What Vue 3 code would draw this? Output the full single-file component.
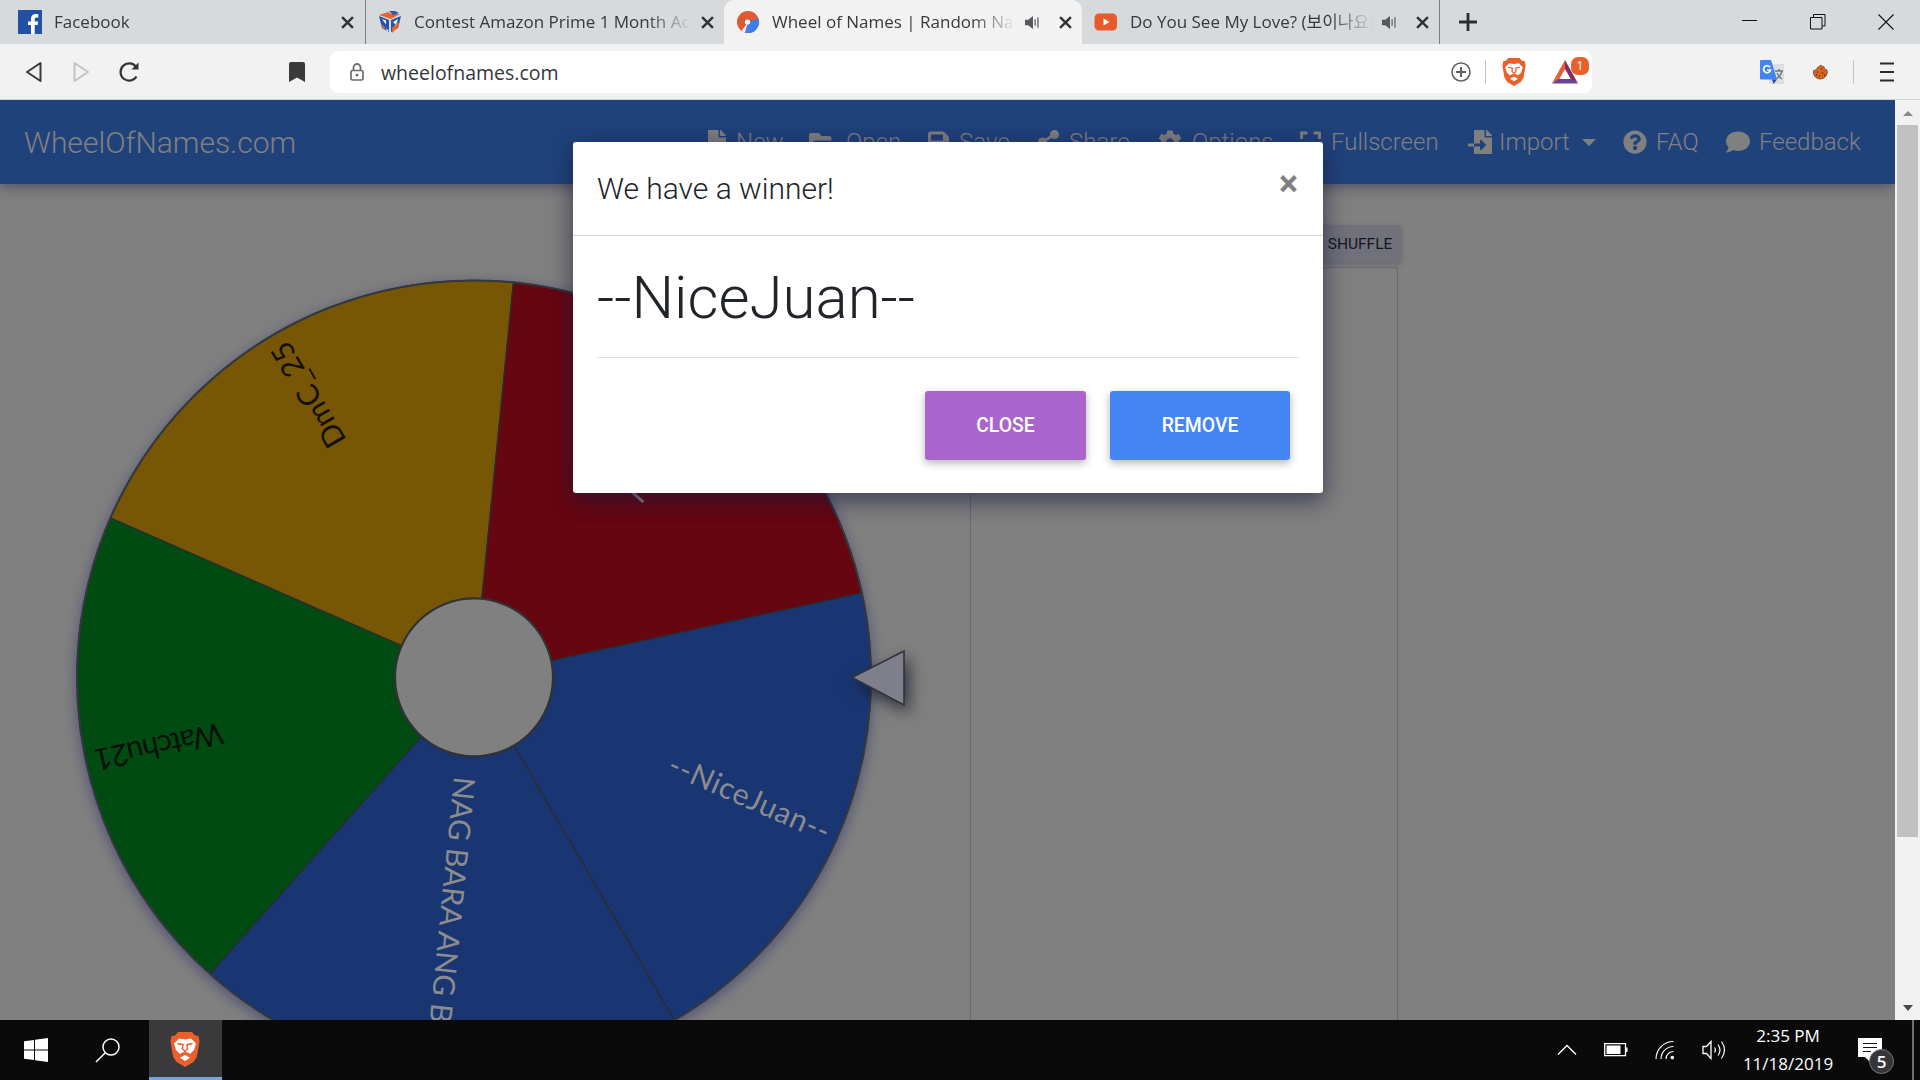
<script setup>
import { computed, ref } from "vue";

// Browser tabs
const tabs = ref([
  { id: "facebook", title: "Facebook", audio: false, active: false },
  { id: "contest", title: "Contest Amazon Prime 1 Month Access", audio: false, active: false },
  { id: "names", title: "Wheel of Names | Random Name Picker", audio: true, active: true },
  { id: "youtube", title: "Do You See My Love? (보이나요)", audio: true, active: false },
]);

// Navbar links, icons on a 512 high grid
const navItems = [
  {
    label: "New",
    w: 384,
    path: "M224 136V0H24C10.7 0 0 10.7 0 24v464c0 13.3 10.7 24 24 24h336c13.3 0 24-10.7 24-24V160H248c-13.2 0-24-10.8-24-24zm160-14.1v6.1H256V0h6.1c6.4 0 12.5 2.5 17 7l97.9 98c4.5 4.5 7 10.6 7 16.9z",
  },
  {
    label: "Open",
    w: 576,
    path: "M572.694 292.093L500.27 416.248A63.997 63.997 0 0 1 444.989 448H45.025c-18.523 0-30.064-20.093-20.731-36.093l72.424-124.155A64 64 0 0 1 152 256h399.964c18.523 0 30.064 20.093 20.73 36.093zM152 224h328v-48c0-26.51-21.49-48-48-48H272l-64-64H48C21.49 64 0 85.49 0 112v278.046l69.077-118.418C86.214 242.25 117.989 224 152 224z",
  },
  {
    label: "Save",
    w: 448,
    path: "M433.941 129.941l-83.882-83.882A48 48 0 0 0 316.118 32H48C21.49 32 0 53.49 0 80v352c0 26.51 21.49 48 48 48h352c26.51 0 48-21.49 48-48V163.882a48 48 0 0 0-14.059-33.941zM224 416c-35.346 0-64-28.654-64-64 0-35.346 28.654-64 64-64s64 28.654 64 64c0 35.346-28.654 64-64 64zm96-304.52V212c0 6.627-5.373 12-12 12H76c-6.627 0-12-5.373-12-12V108c0-6.627 5.373-12 12-12h228.52c3.183 0 6.235 1.264 8.485 3.515l3.48 3.48A11.996 11.996 0 0 1 320 111.48z",
  },
  {
    label: "Share",
    w: 448,
    path: "M352 320c-22.608 0-43.387 7.819-59.79 20.895l-102.486-64.054a96.551 96.551 0 0 0 0-41.683l102.486-64.054C308.613 184.181 329.392 192 352 192c53.019 0 96-42.981 96-96S405.019 0 352 0s-96 42.981-96 96c0 7.158.79 14.13 2.276 20.841L155.79 180.895C139.387 167.819 118.608 160 96 160c-53.019 0-96 42.981-96 96s42.981 96 96 96c22.608 0 43.387-7.819 59.79-20.895l102.486 64.054A96.301 96.301 0 0 0 256 416c0 53.019 42.981 96 96 96s96-42.981 96-96-42.981-96-96-96z",
  },
  {
    label: "Options",
    w: 512,
    path: "M487.4 315.7l-42.6-24.6c4.3-23.2 4.3-47 0-70.2l42.6-24.6c4.9-2.8 7.1-8.6 5.5-14-11.1-35.6-30-67.8-54.7-94.6-3.8-4.1-10-5.1-14.8-2.3L380.8 110c-17.9-15.4-38.5-27.3-60.8-35.1V25.8c0-5.6-3.9-10.5-9.4-11.7-36.7-8.2-74.3-7.8-109.2 0-5.5 1.2-9.4 6.1-9.4 11.7V75c-22.2 7.9-42.8 19.8-60.8 35.1L88.7 85.5c-4.9-2.8-11-1.9-14.8 2.3-24.7 26.7-43.6 58.9-54.7 94.6-1.7 5.4.6 11.2 5.5 14L67.3 221c-4.3 23.2-4.3 47 0 70.2l-42.6 24.6c-4.9 2.8-7.1 8.6-5.5 14 11.1 35.6 30 67.8 54.7 94.6 3.8 4.1 10 5.1 14.8 2.3l42.6-24.6c17.9 15.4 38.5 27.3 60.8 35.1v49.2c0 5.6 3.9 10.5 9.4 11.7 36.7 8.2 74.3 7.8 109.2 0 5.5-1.2 9.4-6.1 9.4-11.7v-49.2c22.2-7.9 42.8-19.8 60.8-35.1l42.6 24.6c4.9 2.8 11 1.9 14.8-2.3 24.7-26.7 43.6-58.9 54.7-94.6 1.5-5.5-.7-11.3-5.6-14.1zM256 336c-44.1 0-80-35.9-80-80s35.9-80 80-80 80 35.9 80 80-35.9 80-80 80z",
  },
  {
    label: "Fullscreen",
    w: 448,
    path: "M0 180V56c0-13.3 10.7-24 24-24h124c6.6 0 12 5.4 12 12v40c0 6.6-5.4 12-12 12H64v84c0 6.6-5.4 12-12 12H12c-6.6 0-12-5.4-12-12zM288 44v40c0 6.6 5.4 12 12 12h84v84c0 6.6 5.4 12 12 12h40c6.6 0 12-5.4 12-12V56c0-13.3-10.7-24-24-24H300c-6.6 0-12 5.4-12 12zM436 320h-40c-6.6 0-12 5.4-12 12v84h-84c-6.6 0-12 5.4-12 12v40c0 6.6 5.4 12 12 12h124c13.3 0 24-10.7 24-24V332c0-6.6-5.4-12-12-12zM160 468v-40c0-6.6-5.4-12-12-12H64v-84c0-6.6-5.4-12-12-12H12c-6.6 0-12 5.4-12 12v124c0 13.3 10.7 24 24 24h124c6.6 0 12-5.4 12-12z",
  },
  {
    label: "Import",
    w: 512,
    caret: true,
    path: "M16 288c-8.8 0-16 7.2-16 16v32c0 8.8 7.2 16 16 16h112v-64zm489-183L407.1 7c-4.5-4.5-10.6-7-17-7H384v128h128v-6.1c0-6.3-2.5-12.4-7-16.9zm-153 31V0H152c-13.3 0-24 10.7-24 24v264h128v-65.2c0-14.3 17.3-21.4 27.4-11.3L379 308c6.6 6.7 6.6 17.4 0 24l-95.7 96.4c-10.1 10.1-27.4 3-27.4-11.3V352H128v136c0 13.3 10.7 24 24 24h336c13.3 0 24-10.7 24-24V160H376c-13.2 0-24-10.8-24-24z",
  },
  {
    label: "FAQ",
    w: 512,
    path: "M504 256c0 136.997-111.043 248-248 248S8 392.997 8 256C8 119.083 119.043 8 256 8s248 111.083 248 248zM262.655 90c-54.497 0-89.255 22.957-116.549 63.758-3.536 5.286-2.353 12.415 2.715 16.258l34.699 26.31c5.205 3.947 12.621 3.008 16.665-2.122 17.864-22.658 30.113-35.797 57.303-35.797 20.429 0 45.698 13.148 45.698 32.958 0 14.976-12.363 22.667-32.534 33.976C247.128 238.528 216 254.941 216 296v4c0 6.627 5.373 12 12 12h56c6.627 0 12-5.373 12-12v-1.333c0-28.462 83.186-29.647 83.186-106.667 0-58.002-60.165-102-116.531-102zM256 338c-25.365 0-46 20.635-46 46 0 25.364 20.635 46 46 46s46-20.636 46-46c0-25.365-20.635-46-46-46z",
  },
  {
    label: "Feedback",
    w: 512,
    path: "M256 32C114.6 32 0 125.1 0 240c0 49.6 21.4 95 57 130.7C44.5 421.1 2.7 466 2.2 466.5c-2.2 2.3-2.8 5.7-1.5 8.7S4.8 480 8 480c66.3 0 116-31.8 140.6-51.4 32.7 12.3 69 19.4 107.4 19.4 141.4 0 256-93.1 256-208S397.4 32 256 32z",
  },
];

// Wheel geometry, in the wheel's own drawing area
const cx = 474;
const cy = 493.4;
const radius = 397;
const startAngle = -12.3;

const entries = ref([
  { name: "--NiceJuan--", color: "#193673", ink: "#8c8c8e", from: 214, length: 173 },
  { name: "NAG BARA ANG BA", color: "#193673", ink: "#8c8c8e", from: 100, length: 267 },
  { name: "Watchu21", color: "#004b11", ink: "#061008", from: 257, length: 131 },
  { name: "DmC_25", color: "#775705", ink: "#141003", from: 269, length: 117 },
  { name: "l", color: "#660610", ink: "#8c8c8e", from: 240, length: 6 },
]);

const point = (deg) => {
  const rad = (deg * Math.PI) / 180;
  return `${(cx + radius * Math.cos(rad)).toFixed(2)} ${(cy + radius * Math.sin(rad)).toFixed(2)}`;
};

const slices = computed(() => {
  const step = 360 / entries.value.length;
  return entries.value.map((entry, i) => {
    const a = startAngle + i * step;
    return {
      ...entry,
      d: `M${cx} ${cy}L${point(a)}A${radius} ${radius} 0 0 1 ${point(a + step)}Z`,
      turn: `translate(${cx} ${cy}) rotate(${a + step / 2})`,
    };
  });
});

const showWinner = ref(true);
const winner = ref("--NiceJuan--");

const removeWinner = () => {
  entries.value = entries.value.filter((e) => e.name !== winner.value);
  showWinner.value = false;
};
</script>

<template>
  <div class="desktop">
    <!-- Tab strip -->
    <div class="tab-strip">
      <div v-for="tab in tabs" :key="tab.id" :class="['tab', `tab-${tab.id}`, { active: tab.active }]">
        <svg v-if="tab.id === 'facebook'" class="favicon" viewBox="0 0 24 24">
          <rect width="24" height="24" fill="#2251a4" />
          <path d="M13 24v-9h-3v-3.500h3V9c0-3.200 1.900-5 4.800-5l2.500.2v3.200h-1.700c-1.500 0-1.900.8-1.900 1.900v2.200h3.500l-.5 3.500h-3v9z" fill="#fff" />
        </svg>
        <svg v-else-if="tab.id === 'contest'" class="favicon" viewBox="0 0 24 24">
          <path d="M1 5l9-3 3 2 9 0-9 5z" fill="#e8642f" />
          <path d="M11 1l6 0 4 2-6 2z" fill="#2a56ab" />
          <path d="M1 6l10 4v12l-7-4z" fill="#2453ab" />
          <path d="M23 6l-10 4v12l7-4z" fill="#2453ab" />
          <path d="M3 14l4 3-1 3zM20 12l1 4-7 7v-5z" fill="#e8642f" />
          <path d="M4 9l4 1.500v4zM15 12l5-3-2 6z" fill="#eef1f8" />
          <path d="M8 18l3 3H9z" fill="#fff" />
        </svg>
        <svg v-else-if="tab.id === 'names'" class="favicon" viewBox="0 0 24 24">
          <circle cx="12" cy="12" r="11" fill="#df5933" />
          <path d="M12 12L22.500 8.500A11 11 0 0 1 9 22.600z" fill="#3f80e8" />
          <path d="M12 12L9 22.600A11 11 0 0 1 5.500 21z" fill="#eee" />
          <circle cx="11.500" cy="12" r="2.600" fill="#fff" />
        </svg>
        <svg v-else class="favicon" viewBox="0 0 24 24">
          <rect x="0.500" y="3.500" width="22.500" height="17" rx="4.500" fill="#e85a2b" />
          <path d="M9.500 8.500l6 3.500-6 3.500z" fill="#fff" />
        </svg>
        <span class="tab-title">{{ tab.title }}</span>
        <svg v-if="tab.audio" class="audio" viewBox="0 0 16 16">
          <path d="M0 5h3.500L8.500 1v14L3.500 11H0z" fill="#55595d" />
          <path d="M10.800 4.500v7M13.800 2.500v11" stroke="#6d7175" stroke-width="1.500" />
        </svg>
        <svg class="tab-close" viewBox="0 0 12 12">
          <path d="M1 1l10 10M11 1L1 11" stroke="#2f3235" stroke-width="2.200" />
        </svg>
      </div>
      <svg class="new-tab" viewBox="0 0 18 18">
        <path d="M9 0v18M0 9h18" stroke="#2b2e31" stroke-width="2.800" />
      </svg>
      <div class="window-buttons">
        <svg viewBox="0 0 16 16"><path d="M0 6.500h15" stroke="#111" /></svg>
        <svg viewBox="0 0 16 16">
          <path d="M.5 3.500h11.500v11.500H.5zM3.500 3.500V.5H15v11.500h-3" fill="none" stroke="#111" />
        </svg>
        <svg viewBox="0 0 16 16"><path d="M.5.500l15 15M15.500.500l-15 15" stroke="#111" stroke-width="1.100" /></svg>
      </div>
    </div>

    <!-- Address bar -->
    <div class="toolbar">
      <svg class="back" viewBox="0 0 18 22">
        <path d="M15.500 2v18L2 11z" fill="none" stroke="#3a3a3c" stroke-width="2" stroke-linejoin="round" />
      </svg>
      <svg class="forward" viewBox="0 0 18 22">
        <path d="M2.500 2v18L16 11z" fill="none" stroke="#c3c3c4" stroke-width="2" stroke-linejoin="round" />
      </svg>
      <svg class="reload" viewBox="0 0 22 22">
        <path d="M18.500 15.500A8.600 8.600 0 1 1 18 5.800" fill="none" stroke="#333" stroke-width="2.200" />
        <path d="M20.500 1.500v7h-7z" fill="#333" />
      </svg>
      <svg class="bookmark" viewBox="0 0 16 20">
        <path d="M2 0h12q2 0 2 2v18l-8-4.500L0 20V2q0-2 2-2z" fill="#3a3a3c" />
      </svg>
      <div class="omnibox">
        <svg class="lock" viewBox="0 0 14 18">
          <path d="M3.500 7.500V4.500a3.500 3.500 0 0 1 7 0v3" fill="none" stroke="#6a6d70" stroke-width="1.800" />
          <rect x="1" y="7.500" width="12" height="9.500" rx="1.500" fill="none" stroke="#6a6d70" stroke-width="1.700" />
          <circle cx="7" cy="12.200" r="1.400" fill="#6a6d70" />
        </svg>
        <span class="url">wheelofnames.com</span>
        <svg class="zoom-in" viewBox="0 0 20 20">
          <circle cx="10" cy="10" r="9" fill="none" stroke="#5f6368" stroke-width="1.600" />
          <path d="M10 5v10M5 10h10" stroke="#5f6368" stroke-width="2" />
        </svg>
        <i class="divider"></i>
        <svg class="brave" viewBox="0 0 30 35">
          <path d="M8 0h14l3 3.500 3.500.5 1 5.500-.5 3-2 12-3.500 5.500L15 35l-8.500-5L3 24.500 1 12.500.500 9.500 1.500 4 5 3.500z" fill="#e9602d" />
          <path d="M15 7.500l6-1 5 5-2 6.500-4 4-3-1.500L15 22l-2-1.500L10 22l-4-4-2-6.500 5-5zM15 23l5 2.800-5 3.200-5-3.200z" fill="#fff" />
          <path d="M7.500 11.500l5.500 1.200-.6 4 2.600 2.500 2.600-2.500-.6-4 5.500-1.200M15 19v3.500M11 22l4-1.500 4 1.500" fill="none" stroke="#e9602d" stroke-width="1.500" />
        </svg>
        <div class="rewards">
          <svg viewBox="0 0 26 24">
            <path d="M13 0L0 23.500l7-4L13 9z" fill="#e85c30" />
            <path d="M13 0l13 23.500-7-4L13 9z" fill="#8b2b63" />
            <path d="M0 23.500h26l-6.500-4.500h-13z" fill="#67439c" />
          </svg>
          <span class="rewards-count">1</span>
        </div>
      </div>
      <svg class="translate" viewBox="0 0 24 24">
        <rect x="9" y="4" width="15" height="20" fill="#dcdee1" />
        <path d="M15 11h8M19 9v2M22 11q-1 5-6 8M17 13q2 4 5 6" fill="none" stroke="#71777d" stroke-width="1.400" />
        <path d="M1 0h10l6 19.500H1q-1 0-1-1V1q0-1 1-1z" fill="#4384f0" />
        <path d="M12 19.500h5L13.500 24z" fill="#1e4ca5" />
        <path d="M10 7.300A3.500 3.500 0 1 0 10.500 10H7" fill="none" stroke="#fff" stroke-width="1.700" />
      </svg>
      <svg class="cookie" viewBox="0 0 16 16">
        <path d="M9 1q1 2 3 1.500Q12 5 15 6a7 7 0 1 1-13.500.5Q1 8 3 6q2 0 2-2z" fill="#d4641f" stroke="#6f3b26" stroke-width=".7" />
        <path d="M5 8h1M9 5h1M10 9h1M7 12h1M4 11h1M12 11h1" stroke="#57301f" stroke-width="1.400" />
      </svg>
      <i class="divider"></i>
      <svg class="menu" viewBox="0 0 14 20">
        <path d="M0 1.500h14M0 10h14M0 18.500h14" stroke="#2c2c2e" stroke-width="2.200" />
      </svg>
    </div>

    <!-- Page -->
    <div class="viewport">
      <div class="page">
        <header class="navbar">
          <span class="brand">WheelOfNames.com</span>
          <nav class="nav">
            <a v-for="item in navItems" :key="item.label" class="nav-link">
              <svg height="24" :width="(item.w * 24) / 512" :viewBox="`0 0 ${item.w} 512`">
                <path :d="item.path" fill="currentColor" />
              </svg>
              <span>{{ item.label }}</span>
              <i v-if="item.caret" class="caret"></i>
            </a>
          </nav>
        </header>

        <main class="content">
          <svg class="wheel" viewBox="0 0 970 836">
            <g class="disc">
              <path v-for="slice in slices" :key="slice.name" :d="slice.d" :fill="slice.color" stroke="#2b2d30" stroke-width="1.300" />
              <circle :cx="cx" :cy="cy" :r="radius" fill="none" stroke="#34383f" stroke-width="2" />
            </g>
            <text
              v-for="slice in slices"
              :key="slice.name"
              class="slice-name"
              :transform="slice.turn"
              :x="slice.from"
              y="10"
              :fill="slice.ink"
              :textLength="slice.length"
            >{{ slice.name }}</text>
            <circle :cx="cx" :cy="cy" r="79" fill="#808080" stroke="#303236" stroke-width="2.200" />
            <path class="pointer" d="M852 493.500L904 467v54z" fill="#7f7f8b" stroke="#303338" stroke-width="1.600" />
          </svg>
          <section class="names">
            <button class="shuffle">SHUFFLE</button>
            <div class="names-box"></div>
          </section>
        </main>
      </div>
      <div class="scrollbar">
        <i class="arrow up"></i>
        <i class="thumb"></i>
        <i class="arrow down"></i>
      </div>
    </div>

    <!-- Taskbar -->
    <footer class="taskbar">
      <svg class="start" viewBox="0 0 24 24">
        <path d="M0 3.300l10-1.400v9.600H0zM11 1.700L24 0v11.500H11zM0 12.500h10v9.600L0 20.700zM11 12.500h13V24l-13-1.800z" fill="#fff" />
      </svg>
      <svg class="search" viewBox="0 0 25 25">
        <circle cx="16" cy="9" r="8" fill="none" stroke="#fff" stroke-width="1.500" />
        <path d="M10.300 14.700L1 24" stroke="#fff" stroke-width="1.500" />
      </svg>
      <div class="task-app">
        <svg viewBox="0 0 30 35">
          <path d="M8 0h14l3 3.500 3.500.5 1 5.500-.5 3-2 12-3.500 5.500L15 35l-8.500-5L3 24.500 1 12.500.500 9.500 1.500 4 5 3.500z" fill="#e9602d" />
          <path d="M15 7.500l6-1 5 5-2 6.500-4 4-3-1.500L15 22l-2-1.500L10 22l-4-4-2-6.500 5-5zM15 23l5 2.800-5 3.200-5-3.200z" fill="#fff" />
          <path d="M7.500 11.500l5.500 1.200-.6 4 2.600 2.500 2.600-2.500-.6-4 5.500-1.200M15 19v3.500M11 22l4-1.500 4 1.500" fill="none" stroke="#e9602d" stroke-width="1.500" />
        </svg>
      </div>
      <div class="tray">
        <svg width="20" height="20" viewBox="0 0 20 20"><path d="M1 14.500l9-9 9 9" fill="none" stroke="#fff" stroke-width="1.400" /></svg>
        <svg width="24" height="14" viewBox="0 0 24 14">
          <path d="M.7.700h20.800v12H.7z" fill="none" stroke="#fff" stroke-width="1.300" />
          <path d="M2.500 2.500h14v8.400h-14zM22 4.500h1.500v4.500H22z" fill="#fff" />
        </svg>
        <svg width="20" height="20" viewBox="0 0 20 20">
          <path d="M1 19A17.500 17.500 0 0 1 18.500 1.500M6 19A12.500 12.500 0 0 1 18.500 6.500M11 19a7.500 7.500 0 0 1 7.500-7.500" fill="none" stroke="#fff" stroke-width="1.200" />
          <circle cx="17.300" cy="17.600" r="1.800" fill="#fff" />
        </svg>
        <svg width="24" height="20" viewBox="0 0 24 20">
          <path d="M1 6.500h3.500L9 1.500v17l-4.500-5H1z" fill="none" stroke="#fff" stroke-width="1.300" />
          <path d="M12.500 7.500q2 2.500 0 5M16 4.500q4 5.500 0 11M19.500 1.500q6 8.500 0 17" fill="none" stroke="#fff" stroke-width="1.200" />
        </svg>
      </div>
      <div class="clock">
        <span>2:35 PM</span>
        <span>11/18/2019</span>
      </div>
      <div class="action-center">
        <svg width="24" height="26" viewBox="0 0 24 26">
          <path d="M0 0h24v19H13v6l-6-6H0z" fill="#fff" />
          <path d="M5 5.500h14M5 9.500h14M5 13.500h8" stroke="#111" stroke-width="1.200" />
        </svg>
        <span class="notice-count">5</span>
      </div>
    </footer>

    <!-- Winner dialog -->
    <div v-if="showWinner" class="modal">
      <div class="modal-header">
        <h5>We have a winner!</h5>
        <span class="modal-x" @click="showWinner = false">×</span>
      </div>
      <div class="modal-body">
        <h1>{{ winner }}</h1>
        <div class="modal-actions">
          <button class="btn close" @click="showWinner = false">CLOSE</button>
          <button class="btn remove" @click="removeWinner">REMOVE</button>
        </div>
      </div>
    </div>
  </div>
</template>

<style>
body {
  margin: 0;
  overflow: hidden;
}
</style>

<style scoped>
.desktop {
  position: relative;
  display: flex;
  flex-direction: column;
  width: 1920px;
  height: 1080px;
  overflow: hidden;
  box-sizing: border-box;
  font-family: "Open Sans", "Noto Sans CJK KR", sans-serif;
}

svg {
  display: block;
  flex: none;
}

button {
  border: 0;
  font-family: Roboto, sans-serif;
}

.tab-strip {
  display: flex;
  align-items: center;
  height: 44px;
  background: #d6dadd;
}

.tab {
  display: flex;
  flex: none;
  align-items: center;
  box-sizing: border-box;
  width: 358px;
  height: 44px;
  padding: 0 10px 0 12px;
}

.tab-facebook {
  width: 366px;
  padding-left: 18px;
  padding-right: 11px;
  border-right: 1px solid #7b7f83;
}

.tab-youtube {
  border-right: 1px solid #7b7f83;
}

.tab.active {
  background: #f2f2f2;
  border-radius: 10px 10px 0 0;
}

.favicon {
  width: 24px;
  height: 24px;
}

.tab-title {
  flex: 1;
  margin: 0 9px 0 12px;
  overflow: hidden;
  white-space: nowrap;
  font-size: 17px;
  line-height: 30px;
  color: #37393c;
  mask-image: linear-gradient(90deg, #000 calc(100% - 45px), transparent);
}

.audio {
  width: 15px;
  height: 15px;
  margin-right: 19px;
}

.tab-close {
  width: 13px;
  height: 13px;
}

.new-tab {
  width: 18px;
  height: 18px;
  margin-left: 19px;
}

.window-buttons {
  display: flex;
  gap: 52px;
  margin-left: auto;
  margin-right: 26px;
}

.window-buttons svg {
  width: 16px;
  height: 16px;
}

.toolbar {
  display: flex;
  align-items: center;
  box-sizing: border-box;
  height: 56px;
  padding: 0 26px 0 25px;
  background: #f2f2f2;
  border-bottom: 1px solid #cdd1d6;
}

.back,
.forward {
  width: 18px;
  height: 22px;
}

.forward {
  margin-left: 29px;
}

.reload {
  width: 22px;
  height: 22px;
  margin-left: 28px;
}

.bookmark {
  width: 16px;
  height: 20px;
  margin-left: 149px;
}

.omnibox {
  display: flex;
  align-items: center;
  box-sizing: border-box;
  width: 1262px;
  height: 42px;
  margin-left: 25px;
  padding: 0 10px 0 20px;
  background: #fff;
  border-radius: 8px;
}

.lock {
  width: 14px;
  height: 18px;
}

.url {
  margin-left: 17px;
  padding-top: 1px;
  font-size: 19.5px;
  color: #35373a;
}

.zoom-in {
  width: 20px;
  height: 20px;
  margin-left: auto;
}

.divider {
  width: 1px;
  height: 24px;
  margin-left: 14px;
  background: #c2c4c7;
}

.brave {
  width: 24px;
  height: 28px;
  margin-left: 16px;
}

.rewards {
  position: relative;
  width: 30px;
  margin-left: 26px;
}

.rewards svg {
  width: 26px;
  height: 24px;
}

.rewards-count {
  position: absolute;
  top: -3px;
  left: 19px;
  width: 18px;
  height: 18px;
  border-radius: 7px;
  background: #e9602d;
  color: #fff;
  font-size: 12px;
  line-height: 18px;
  text-align: center;
}

.translate {
  width: 24px;
  height: 24px;
  margin-left: 168px;
}

.cookie {
  width: 16px;
  height: 16px;
  margin-left: 28px;
}

.toolbar > .divider {
  margin-left: 25px;
}

.menu {
  width: 14px;
  height: 20px;
  margin-left: auto;
}

.viewport {
  display: flex;
  height: 920px;
}

.page {
  display: flex;
  flex-direction: column;
  width: 1895px;
  overflow: hidden;
  background: #808080;
  font-family: Roboto, sans-serif;
}

.navbar {
  display: flex;
  align-items: center;
  justify-content: space-between;
  flex: none;
  box-sizing: border-box;
  height: 84px;
  padding-left: 24px;
  background: #20427b;
  color: #808080;
  font-weight: 300;
  box-shadow: 0 3px 12px rgba(50, 50, 80, 0.6);
}

.brand {
  padding-top: 1px;
  font-size: 30px;
}

.nav {
  display: grid;
  grid-template-columns: 101px 119px 110px 120px 142px 168px 155px 103px 169px;
}

.nav-link {
  display: flex;
  align-items: center;
  gap: 9px;
  font-size: 24px;
  white-space: nowrap;
}

.nav-link:nth-child(-n + 6) {
  gap: 10px;
}

.nav-link:nth-child(7) {
  gap: 7px;
}

.caret {
  margin-left: 5px;
  border: 7px solid transparent;
  border-top-color: #808080;
  border-bottom: 0;
}

.content {
  display: flex;
  height: 836px;
}

.wheel {
  width: 970px;
  height: 836px;
}

.disc {
  filter: drop-shadow(0 4px 7px rgba(60, 64, 110, 0.75));
}

.pointer {
  filter: drop-shadow(4px 7px 8px rgba(25, 25, 45, 0.8));
}

.slice-name {
  font-family: Lato, sans-serif;
  font-size: 30px;
}

.names {
  display: flex;
  flex-direction: column;
  align-items: flex-end;
  width: 428px;
  padding-top: 41px;
}

.shuffle {
  width: 84px;
  height: 37px;
  margin-right: -3px;
  padding: 0 0 0 2px;
  border-radius: 3px;
  background: #71717b;
  color: #15161a;
  font-size: 15.5px;
  box-shadow: 0 2px 5px rgba(60, 60, 80, 0.4);
}

.names-box {
  flex: 1;
  align-self: stretch;
  box-sizing: border-box;
  margin-top: 5px;
  border: 1px solid #66677a;
  border-bottom: 0;
  border-radius: 4px 4px 0 0;
}

.scrollbar {
  display: flex;
  flex-direction: column;
  align-items: center;
  width: 25px;
  background: #f1f1f1;
}

.arrow {
  border: 5px solid transparent;
}

.arrow.up {
  margin-top: 11px;
  border-top: 0;
  border-bottom: 5px solid #8a8a8a;
}

.thumb {
  width: 21px;
  height: 712px;
  margin-top: 9px;
  background: #c1c1c1;
}

.arrow.down {
  margin-top: auto;
  margin-bottom: 9px;
  border-bottom: 0;
  border-top: 6px solid #4a4a4a;
}

.taskbar {
  display: flex;
  align-items: center;
  height: 60px;
  background: #0a0a0a;
  color: #fff;
}

.start {
  width: 24px;
  height: 24px;
  margin-left: 24px;
}

.search {
  width: 25px;
  height: 25px;
  margin-left: 47px;
}

.task-app {
  display: flex;
  align-items: center;
  justify-content: center;
  box-sizing: border-box;
  width: 73px;
  height: 60px;
  margin-left: 29px;
  padding: 2px 2px 0 0;
  border-bottom: 3px solid #76a4e4;
  background: #3a3a3c;
}

.task-app svg {
  width: 30px;
  height: 35px;
}

.tray {
  display: flex;
  align-items: center;
  gap: 27px;
  margin-left: auto;
}

.clock {
  display: flex;
  flex-direction: column;
  align-items: center;
  width: 100px;
  margin-left: 12px;
  font-size: 17px;
  line-height: 28px;
}

.action-center {
  position: relative;
  box-sizing: border-box;
  width: 56px;
  height: 60px;
  margin-left: 20px;
  margin-right: 6px;
  padding-top: 18px;
  border-right: 2px solid #6d6d78;
}

.notice-count {
  position: absolute;
  top: 29px;
  left: 11px;
  box-sizing: border-box;
  width: 25px;
  height: 25px;
  border: 1px solid #77777b;
  border-radius: 50%;
  background: #36363a;
  font-size: 17px;
  font-weight: 600;
  line-height: 23px;
  text-align: center;
}

.modal {
  position: absolute;
  top: 142px;
  left: 573px;
  box-sizing: border-box;
  width: 750px;
  height: 351px;
  border-radius: 3px;
  background: #fff;
  color: #212529;
  font-family: Roboto, sans-serif;
  box-shadow: 0 8px 20px rgba(25, 25, 60, 0.45), 0 4px 28px rgba(25, 25, 60, 0.3);
}

.modal-header {
  display: flex;
  justify-content: space-between;
  box-sizing: border-box;
  height: 94px;
  padding: 24px 25px 0 24px;
  border-bottom: 1px solid #d4d6d9;
}

.modal-header h5 {
  margin: 0;
  font-size: 30px;
  font-weight: 300;
  line-height: 45px;
}

.modal-x {
  font-size: 36px;
  font-weight: 700;
  line-height: 36px;
  color: #7f7f7f;
}

.modal-body {
  padding: 0 24px;
}

.modal-body h1 {
  box-sizing: border-box;
  height: 122px;
  margin: 0;
  padding-top: 26px;
  border-bottom: 1px solid #dfdfe1;
  font-size: 60px;
  font-weight: 300;
  line-height: 72px;
}

.modal-actions {
  display: flex;
  justify-content: flex-end;
  gap: 24px;
  padding: 33px 9px 0 0;
}

.btn {
  height: 69px;
  padding: 0;
  border-radius: 3px;
  color: #fff;
  font-size: 19.4px;
  font-weight: 500;
  box-shadow: 0 3px 8px rgba(0, 0, 0, 0.3);
}

.btn.close {
  width: 161px;
  background: #a964cd;
}

.btn.remove {
  width: 180px;
  background: #4386f3;
}
</style>
